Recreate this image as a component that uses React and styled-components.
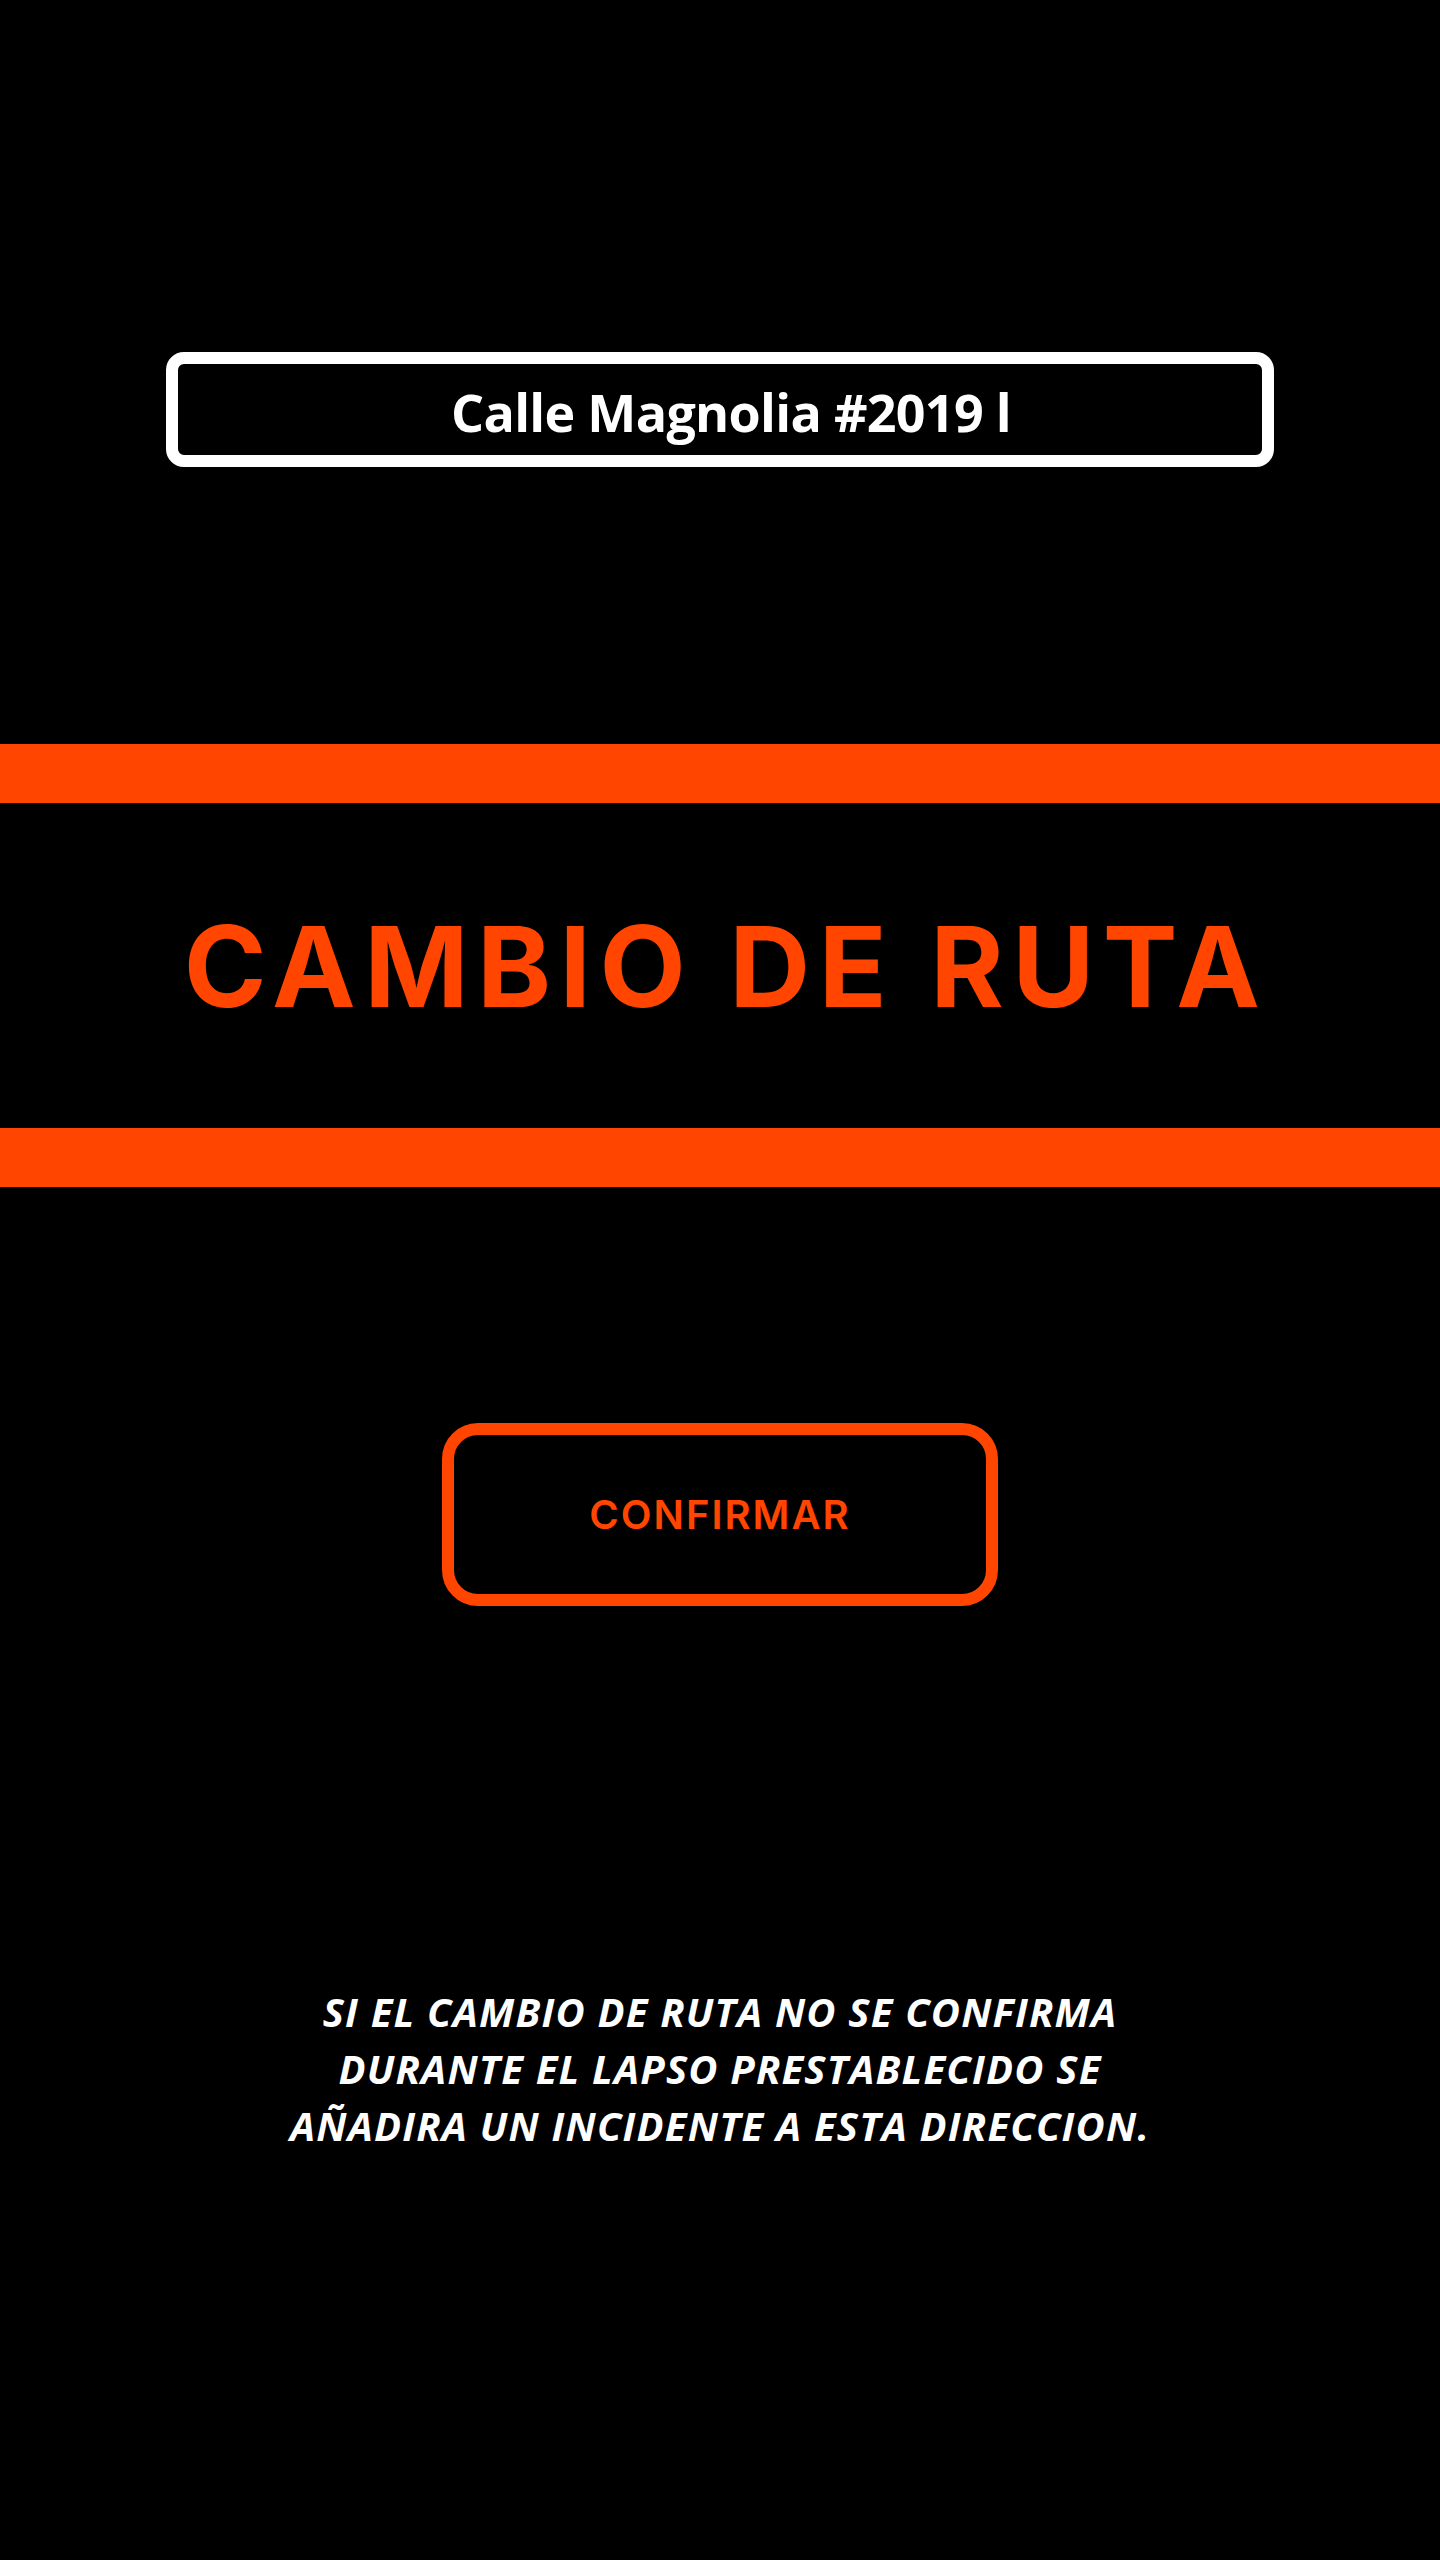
import React from 'react';
import styled, { createGlobalStyle } from 'styled-components';

const ORANGE = '#ff4500';

const GlobalStyle = createGlobalStyle`
  html, body {
    margin: 0;
    padding: 0;
    background: #000;
  }
`;

const Screen = styled.div`
  width: 1440px;
  min-height: 2560px;
  background: #000;
  display: flex;
  flex-direction: column;
  align-items: center;
  padding-top: 352px;
  box-sizing: border-box;
`;

const AddressBox = styled.div`
  width: 1108px;
  height: 115px;
  box-sizing: border-box;
  border: 12px solid #fff;
  border-radius: 18px;
  display: flex;
  align-items: center;
  justify-content: center;
  color: #fff;
  font-family: 'Open Sans', 'Noto Sans', sans-serif;
  font-weight: 700;
  font-size: 52px;
  letter-spacing: -0.7px;
  padding: 4px 0 0 22px;
  margin-bottom: 277px;
`;

const Bar = styled.div`
  width: 100%;
  height: 59px;
  background: ${ORANGE};
`;

const TitleBand = styled.div`
  width: 100%;
  height: 325px;
  display: flex;
  align-items: center;
  justify-content: center;
`;

const Title = styled.h1`
  margin: 0;
  color: ${ORANGE};
  font-family: 'Inter', 'Noto Sans', sans-serif;
  font-weight: 700;
  font-size: 112px;
  letter-spacing: 8.5px;
  line-height: 1;
  padding-left: 12px;
`;

const ConfirmButton = styled.button`
  margin-top: 236px;
  width: 556px;
  height: 183px;
  box-sizing: border-box;
  background: #000;
  border: 12px solid ${ORANGE};
  border-radius: 36px;
  color: ${ORANGE};
  font-family: 'Inter', 'Noto Sans', sans-serif;
  font-weight: 600;
  font-size: 40px;
  letter-spacing: 2px;
  cursor: pointer;
`;

const Notice = styled.p`
  margin: 377px 0 0;
  color: #fff;
  font-family: 'Open Sans', 'Noto Sans', sans-serif;
  font-style: italic;
  font-weight: 700;
  font-size: 40px;
  letter-spacing: 1.2px;
  line-height: 57px;
  text-align: center;
`;

export default function App() {
  return (
    <>
      <GlobalStyle />
      <Screen>
        <AddressBox>Calle Magnolia #2019 l</AddressBox>
        <Bar />
        <TitleBand>
          <Title>CAMBIO DE RUTA</Title>
        </TitleBand>
        <Bar />
        <ConfirmButton>CONFIRMAR</ConfirmButton>
        <Notice>
          SI EL CAMBIO DE RUTA NO SE CONFIRMA
          <br />
          DURANTE EL LAPSO PRESTABLECIDO SE
          <br />
          AÑADIRA UN INCIDENTE A ESTA DIRECCION.
        </Notice>
      </Screen>
    </>
  );
}
